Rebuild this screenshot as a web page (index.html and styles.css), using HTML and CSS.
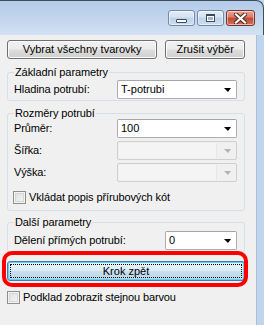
FILE: index.html
```html
<!DOCTYPE html>
<html lang="cs">
<head>
    <meta charset="UTF-8">
    <meta name="viewport" content="width=device-width, initial-scale=1.0">
    <title>Tvarovky</title>
    <link rel="stylesheet" href="styles.css">
</head>
<body>
    <div class="window">
        <div class="titlebar">
            <span class="cap-btn cap-min"><span class="glyph-min"></span></span>
            <span class="cap-btn cap-max"><span class="glyph-max"></span></span>
            <span class="cap-btn cap-close">
                <svg width="13" height="11" viewBox="0 0 13 11">
                    <path d="M2 1.5 L11 9.5 M11 1.5 L2 9.5" stroke="#4a2a25" stroke-width="4.2" stroke-linecap="square"/>
                    <path d="M2 1.5 L11 9.5 M11 1.5 L2 9.5" stroke="#ffffff" stroke-width="2.2" stroke-linecap="square"/>
                </svg>
            </span>
        </div>
        <div class="body">
            <div class="client">
                <div class="top-buttons">
                    <button class="btn btn-all">Vybrat všechny tvarovky</button>
                    <button class="btn btn-cancel">Zrušit výběr</button>
                </div>

                <fieldset class="group group-base">
                    <legend>Základní parametry</legend>
                    <div class="row">
                        <span class="label">Hladina potrubí:</span>
                        <div class="combo"><span class="value">T-potrubi</span><span class="arrow"></span></div>
                    </div>
                </fieldset>

                <fieldset class="group group-size">
                    <legend>Rozměry potrubí</legend>
                    <div class="row">
                        <span class="label">Průměr:</span>
                        <div class="combo"><span class="value">100</span><span class="arrow"></span></div>
                    </div>
                    <div class="row">
                        <span class="label">Šířka:</span>
                        <div class="combo disabled"><span class="value"></span><span class="arrow"></span></div>
                    </div>
                    <div class="row">
                        <span class="label">Výška:</span>
                        <div class="combo disabled"><span class="value"></span><span class="arrow"></span></div>
                    </div>
                    <label class="check check-flange"><span class="box"></span>Vkládat popis přírubových kót</label>
                </fieldset>

                <fieldset class="group group-more">
                    <legend>Další parametry</legend>
                    <div class="row">
                        <span class="label">Dělení přímých potrubí:</span>
                        <div class="combo combo-small"><span class="value">0</span><span class="arrow"></span></div>
                    </div>
                </fieldset>

                <div class="step-back">
                    <button class="btn btn-focus"><span class="focus-rect">Krok zpět</span></button>
                    <div class="highlight"></div>
                </div>

                <label class="check check-color"><span class="box"></span>Podklad zobrazit stejnou barvou</label>
            </div>
            <div class="frame"></div>
        </div>
    </div>
</body>
</html>
```

FILE: styles.css
```css
body {
    margin: 0;
    font-family: "Liberation Sans", Arial, sans-serif;
    font-size: 11px;
    line-height: 13px;
    color: #000;
}

.window {
    width: 264px;
    height: 325px;
    display: flex;
    flex-direction: column;
    overflow: hidden;
    background-color: #c1d6ee;
}

/* title bar */

.titlebar {
    height: 35px;
    box-sizing: border-box;
    display: flex;
    justify-content: flex-end;
    align-items: flex-start;
    padding: 9px 8px 0 0;
    border-top: 1px solid #434b55;
    border-right: 1px solid #434b55;
    border-top-right-radius: 8px;
    background: linear-gradient(#b3cbe8, #c4d7ee 60%, #d3e2f3);
}

.cap-btn {
    width: 27px;
    height: 16px;
    box-sizing: border-box;
    margin-left: 2px;
    border: 1px solid #7389a6;
    border-radius: 3px;
    display: flex;
    justify-content: center;
    align-items: center;
    background: linear-gradient(#e4edf8, #d3e1f1 45%, #bdd1e9 50%, #cddef2);
    box-shadow: inset 0 0 0 1px rgba(255, 255, 255, 0.5);
}

.cap-close {
    width: 29px;
    border-color: #7b3327;
    background: linear-gradient(#e8a698, #d67a67 45%, #c2462f 50%, #d0735c);
}

.glyph-min {
    width: 11px;
    height: 4px;
    box-sizing: border-box;
    margin-top: 5px;
    border: 1px solid #3c4a5d;
    border-radius: 1px;
    background-color: #fff;
}

.glyph-max {
    width: 9px;
    height: 8px;
    box-sizing: border-box;
    border: 1px solid #3c4a5d;
    border-top-width: 2px;
    background-color: #fff;
    box-shadow: inset 0 0 0 1px #fff, inset 0 0 0 3px #9fb3cc;
}

/* client area */

.body {
    flex: 1;
    display: flex;
}

.client {
    width: 256px;
    box-sizing: border-box;
    padding: 5px 11px 0 7px;
    background-color: #f0f0f0;
}

.frame {
    flex: 1;
    border-left: 1px solid #a9c0db;
    background-color: #bfd4ed;
}

/* buttons */

.btn {
    height: 19px;
    box-sizing: border-box;
    padding: 0;
    border: 1px solid #707070;
    border-radius: 3px;
    font: inherit;
    color: #000;
    background: linear-gradient(#f2f2f2, #ebebeb 48%, #dddddd 52%, #cfcfcf);
    box-shadow: inset 0 0 0 1px #fbfbfb;
}

.top-buttons {
    display: flex;
    gap: 8px;
}

.btn-all {
    width: 151px;
}

.btn-cancel {
    width: 80px;
}

/* group boxes (content starts below the legend) */

.group {
    margin: 7px 0 0;
    padding: 0 7px 1px 6px;
    border: 1px solid #d5dfe5;
    border-radius: 3px;
}

.group legend {
    padding: 0 1px;
    line-height: 13px;
    letter-spacing: -0.1px;
}

.label,
.check {
    letter-spacing: -0.12px;
}

.group-base .row {
    margin-top: 1px;
}

.group-size {
    margin-top: 6px;
    padding-bottom: 6px;
}

.group-size .row {
    margin-top: 3px;
}

.group-size .row:first-of-type {
    margin-top: -1px;
}

.group-more {
    margin-top: 5px;
    padding-bottom: 2px;
}

.group-more .row {
    margin-top: 2px;
}

.row {
    display: flex;
    justify-content: space-between;
    align-items: center;
}

/* combo boxes */

.combo {
    width: 120px;
    height: 19px;
    box-sizing: border-box;
    display: flex;
    align-items: center;
    justify-content: space-between;
    padding: 0 5px 0 3px;
    border: 1px solid #abadb3;
    border-top-color: #a3a5ab;
    border-radius: 2px;
    background-color: #fff;
}

.combo-small {
    width: 72px;
}

.combo .arrow {
    width: 0;
    height: 0;
    border-left: 4px solid transparent;
    border-right: 3px solid transparent;
    border-top: 4px solid #000;
    margin-top: 1px;
}

.combo.disabled {
    padding: 1px 5px 1px 1px;
    border-color: #cfcfcf;
    background-color: #f0f0f0;
}

.combo.disabled .value {
    width: 97px;
    height: 100%;
    background-color: #f4f4f4;
    border-right: 1px solid #e6e6e6;
}

.combo.disabled .arrow {
    border-top-color: #b3b3b3;
}

/* check boxes */

.check {
    display: flex;
    align-items: center;
    gap: 3px;
}

.check .box {
    width: 13px;
    height: 13px;
    box-sizing: border-box;
    border: 1px solid #8f8f8f;
    background: linear-gradient(135deg, #dcdcdc, #f8f8f8);
    box-shadow: inset 0 0 0 1px #f4f4f4, inset 0 0 0 2px #d6d6d6;
}

.check-flange {
    margin: 9px 0 0 -1px;
}

.check-color {
    margin-top: 10px;
}

/* step back button with red marker */

.step-back {
    position: relative;
    margin-top: 8px;
}

.btn-focus {
    width: 100%;
    height: 20px;
    padding: 2px;
    border-color: #3c7fb1;
    background: linear-gradient(#eaf4fa, #dbebf5 48%, #c7dfee 52%, #bcd7e9);
    box-shadow: inset 0 0 0 1px #5fd0f5;
}

.focus-rect {
    display: block;
    height: 14px;
    line-height: 13px;
    box-sizing: border-box;
    border: 1px dotted #000;
}

.highlight {
    position: absolute;
    left: -5px;
    right: -3px;
    top: -10px;
    bottom: -6px;
    border: 4px solid #fe0000;
    border-radius: 10px;
}
```
